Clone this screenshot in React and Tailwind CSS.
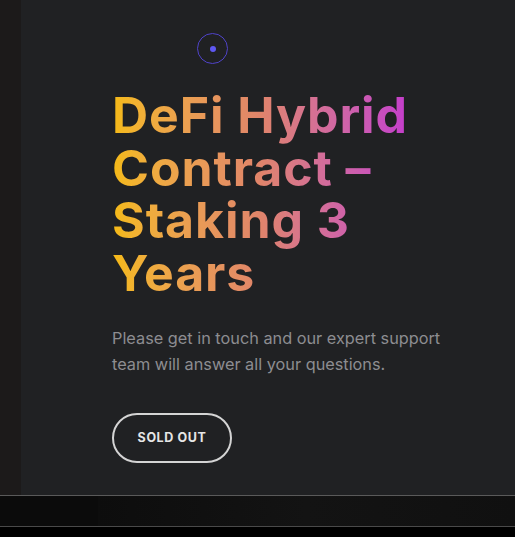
export default function App() {
  return (
    <div className="w-[515px] h-[537px] bg-black flex flex-col overflow-hidden" style={{ fontFamily: 'Inter, "Noto Sans", sans-serif' }}>
      <div className="h-[495px] flex">
        <div className="w-[21px] bg-[#1c1a1a]" />
        <div className="flex-1 bg-[#202123] flex flex-col pl-[91px]">
          <div className="mt-[33px] ml-[85px] w-[31px] h-[31px] rounded-full border border-[#4f43c9] flex items-center justify-center">
            <div className="w-[6px] h-[6px] rounded-full bg-[#5e58f2]" />
          </div>
          <h1 className="mt-[25px] text-[50px] leading-[52.5px] font-bold tracking-[0.9px] bg-gradient-to-r from-[#f5ba12] via-[#e0846a] to-[#c43ccc] bg-clip-text text-transparent w-[296px]">
            DeFi Hybrid Contract – Staking 3 Years
          </h1>
          <p className="mt-[26px] text-[16.3px] leading-[26px] text-[#8d8d91] w-[340px]">
            Please get in touch and our expert support team will answer all your questions.
          </p>
          <div className="mt-[36px]">
            <button className="w-[120px] h-[50px] rounded-full border-2 border-[#d4d4d4] text-[#e6e6e6] text-[12.5px] font-bold tracking-[0.6px]">
              SOLD OUT
            </button>
          </div>
        </div>
      </div>
      <div className="h-px bg-[#5a5a5a]" />
      <div className="h-[30px] flex">
        <div className="w-[98px] bg-[#0b0b0b]" />
        <div className="flex-1 bg-gradient-to-r from-[#0d0d0d] via-[#131313] to-[#101010]" />
      </div>
      <div className="h-px bg-[#4a4a4a]" />
      <div className="flex-1 bg-black" />
    </div>
  );
}
